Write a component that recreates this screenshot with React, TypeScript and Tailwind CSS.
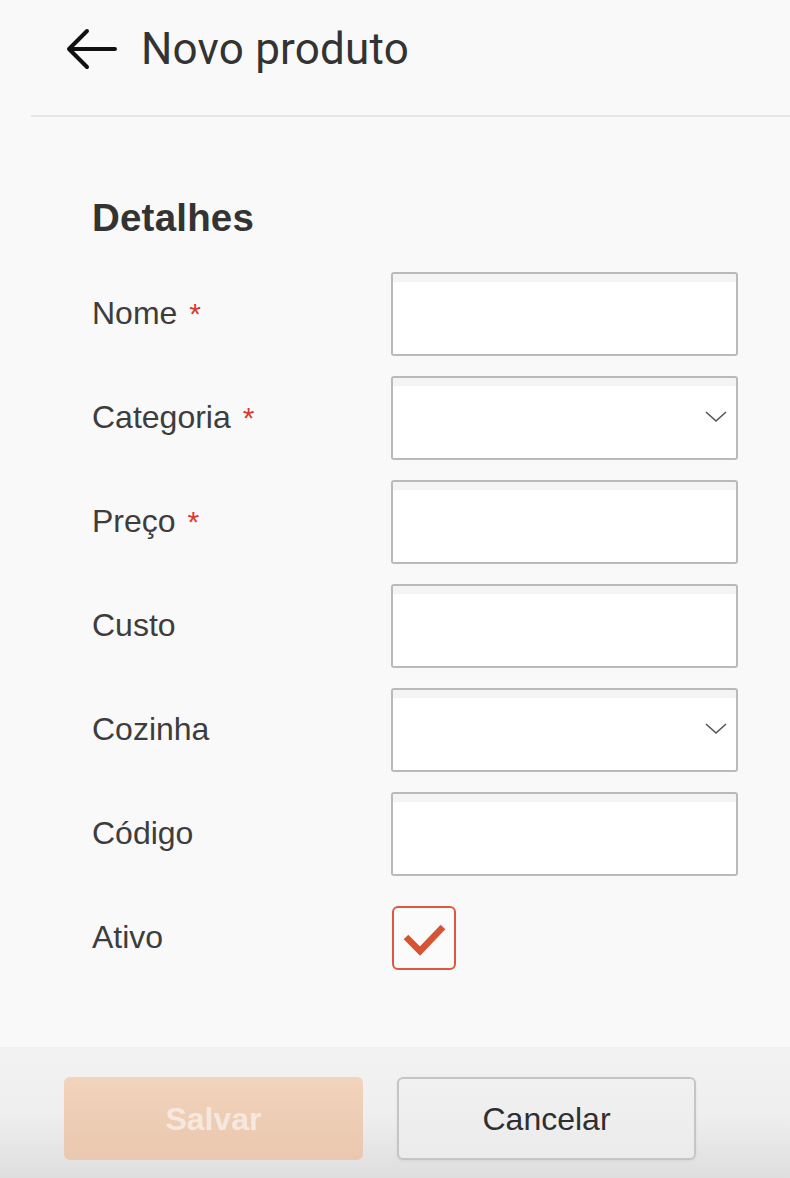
import React from 'react';

interface Field {
  label: string;
  required?: boolean;
  kind: 'text' | 'select' | 'check';
}

const fields: Field[] = [
  { label: 'Nome', required: true, kind: 'text' },
  { label: 'Categoria', required: true, kind: 'select' },
  { label: 'Preço', required: true, kind: 'text' },
  { label: 'Custo', kind: 'text' },
  { label: 'Cozinha', kind: 'select' },
  { label: 'Código', kind: 'text' },
  { label: 'Ativo', kind: 'check' },
];

const inputBox =
  'w-[347px] h-[84px] bg-white border-2 border-[#bababa] rounded-[3px] shadow-[inset_0_8px_0_0_#f4f4f4] outline-none';

const Chevron: React.FC = () => (
  <svg width="24" height="14" viewBox="0 0 24 14" className="absolute right-[10px] top-[34px] pointer-events-none">
    <path d="M2 2 L12 11 L22 2" fill="none" stroke="#555" strokeWidth={1.6} />
  </svg>
);

const FieldControl: React.FC<{ field: Field }> = ({ field }) => {
  if (field.kind === 'check') {
    return (
      <div className="h-[84px] flex items-center pl-[1px]">
        <div className="w-[64px] h-[64px] rounded-[6px] border-2 border-[#dc5a3b] bg-[#fbfbfb] flex items-center justify-center">
          <svg width="64" height="64" viewBox="0 0 64 64" className="-m-[2px]">
            <path d="M14 31 L28 45 L51 21" fill="none" stroke="#d65431" strokeWidth={6.5} />
          </svg>
        </div>
      </div>
    );
  }
  if (field.kind === 'select') {
    return (
      <div className="relative w-[347px]">
        <div className={inputBox} />
        <Chevron />
      </div>
    );
  }
  return <input type="text" className={inputBox} />;
};

const App: React.FC = () => {
  return (
    <div className="min-h-screen bg-[#f9f9f9] flex flex-col font-['Liberation_Sans',Arial,sans-serif]">
      <header className="ml-[31px] h-[117px] border-b-2 border-[#e6e6e6] pl-[35px] pt-[26px]">
        <div className="flex items-center h-[46px] gap-[23px]">
          <svg width="52" height="42" viewBox="0 0 52 42">
            <path
              d="M49 21 H3 M21 3 L3 21 L21 39"
              fill="none"
              stroke="#111"
              strokeWidth={4}
              strokeLinecap="round"
              strokeLinejoin="round"
            />
          </svg>
          <h1 className="font-['Roboto',sans-serif] text-[44px] leading-none text-[#333] tracking-[0.2px]">
            Novo produto
          </h1>
        </div>
      </header>

      <main className="flex-1 pl-[92px] pt-[79px]">
        <h2 className="text-[38.5px] leading-[44px] font-bold text-[#333] tracking-[0.2px]">Detalhes</h2>
        <div className="mt-[32px] flex flex-col gap-[20px]">
          {fields.map((f) => (
            <div key={f.label} className="flex items-center">
              <label className="w-[299px] text-[32px] text-[#3d3d3d] leading-none -mt-[2px]">
                {f.label}
                {f.required && <span className="text-[#d93a2f] ml-[12px] text-[30px]">*</span>}
              </label>
              <FieldControl field={f} />
            </div>
          ))}
        </div>
      </main>

      <footer className="h-[131px] bg-gradient-to-b from-[#f2f2f2] via-[#efefef] to-[#dedede] pl-[64px] pt-[30px] flex items-start gap-[34px]">
        <button
          type="button"
          disabled
          className="w-[299px] h-[83px] rounded-[6px] bg-gradient-to-b from-[#f2d3bb] to-[#eac7af] text-[32px] font-bold text-[#f6e8de]"
        >
          Salvar
        </button>
        <button
          type="button"
          className="w-[299px] h-[83px] rounded-[6px] border-2 border-[#c5c5c5] bg-gradient-to-b from-[#f1f1f1] to-[#ebebeb] text-[32px] text-[#2f2f2f] shadow-[0_1px_3px_rgba(0,0,0,0.06)]"
        >
          Cancelar
        </button>
      </footer>
    </div>
  );
};

export default App;
